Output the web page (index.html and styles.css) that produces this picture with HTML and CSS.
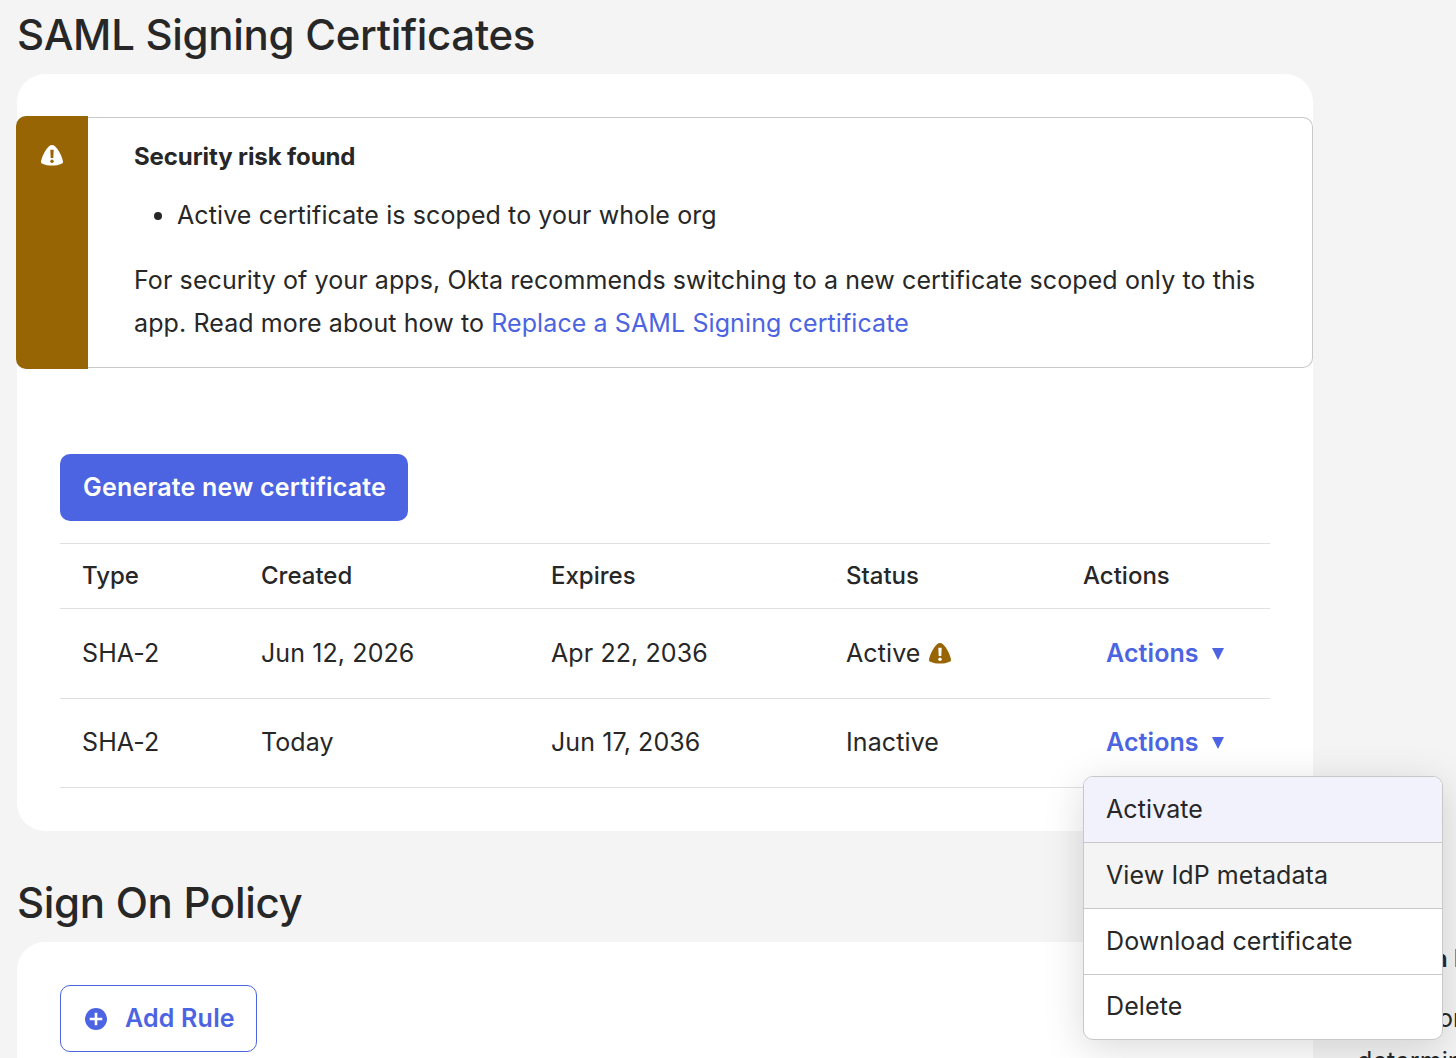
FILE: index.html
```
<!DOCTYPE html>
<html lang="en">
<head>
  <meta charset="UTF-8">
  <meta name="viewport" content="width=device-width, initial-scale=1.0">
  <title>SAML Signing Certificates</title>
  <link rel="stylesheet" href="styles.css">
</head>
<body>
  <div class="page">
    <main class="main">
      <h2>SAML Signing Certificates</h2>

      <section class="card certificates">
        <div class="infobox">
          <div class="infobox-icon">
            <svg width="22" height="21" viewBox="0 0 22 21">
              <path class="shape" d="M11 0C8.800 0 7.200 1.700 5.200 4.600C2.600 8.400 0.900 12.600 0.100 16C-0.200 17.300 0.200 18.200 1.400 18.800C4 20.100 7.600 20.600 11 20.600S18 20.100 20.600 18.800C21.800 18.200 22.200 17.300 21.900 16C21.100 12.600 19.400 8.400 16.800 4.600C14.800 1.700 13.200 0 11 0Z"/>
              <path class="mark" d="M9.300 4.700H12.700L12.300 13H9.700Z"/>
              <circle class="mark" cx="11" cy="16.200" r="1.700"/>
            </svg>
          </div>
          <div class="infobox-body">
            <h3>Security risk found</h3>
            <ul>
              <li>Active certificate is scoped to your whole org</li>
            </ul>
            <p>For security of your apps, Okta recommends switching to a new certificate scoped only to this<br>app. Read more about how to <a href="#">Replace a SAML Signing certificate</a></p>
          </div>
        </div>

        <button class="button button-primary">Generate new certificate</button>

        <table>
          <thead>
            <tr>
              <th class="col-type">Type</th>
              <th class="col-created">Created</th>
              <th class="col-expires">Expires</th>
              <th class="col-status">Status</th>
              <th class="col-actions">Actions</th>
            </tr>
          </thead>
          <tbody>
            <tr class="row-active">
              <td>SHA-2</td>
              <td>Jun 12, 2026</td>
              <td>Apr 22, 2036</td>
              <td>
                <span class="status">Active
                  <svg width="22" height="21" viewBox="0 0 22 21">
                    <path class="shape" d="M11 0C8.800 0 7.200 1.700 5.200 4.600C2.600 8.400 0.900 12.600 0.100 16C-0.200 17.300 0.200 18.200 1.400 18.800C4 20.100 7.600 20.600 11 20.600S18 20.100 20.600 18.800C21.800 18.200 22.200 17.300 21.900 16C21.100 12.600 19.400 8.400 16.800 4.600C14.800 1.700 13.200 0 11 0Z"/>
                    <path class="mark" d="M9.300 4.700H12.700L12.300 13H9.700Z"/>
                    <circle class="mark" cx="11" cy="16.200" r="1.700"/>
                  </svg>
                </span>
              </td>
              <td>
                <a class="actions-toggle" href="#">Actions <span class="caret"></span></a>
              </td>
            </tr>
            <tr class="row-inactive">
              <td>SHA-2</td>
              <td>Today</td>
              <td>Jun 17, 2036</td>
              <td>Inactive</td>
              <td class="dropdown">
                <a class="actions-toggle" href="#">Actions <span class="caret"></span></a>
                <ul class="menu">
                  <li class="focused">Activate</li>
                  <li class="hovered">View IdP metadata</li>
                  <li>Download certificate</li>
                  <li>Delete</li>
                </ul>
              </td>
            </tr>
          </tbody>
        </table>
      </section>

      <h2 class="policy-title">Sign On Policy</h2>

      <section class="card policy">
        <button class="button button-outline">
          <svg width="22" height="22" viewBox="0 0 22 22">
            <circle cx="11" cy="11" r="11" fill="#4c64e1"/>
            <path d="M11 4.700V17.300M4.700 11H17.300" stroke="#fff" stroke-width="2.600"/>
          </svg>
          Add Rule
        </button>
      </section>
    </main>

    <aside class="sidebar">
      <h4>Sign On Policy</h4>
      <p>Rules for apps<br>determine how</p>
    </aside>
  </div>
</body>
</html>
```

FILE: styles.css
```
* {
  box-sizing: border-box;
}

body {
  margin: 0;
  height: 1058px;
  overflow: hidden;
  background-color: #f4f4f4;
  color: #272727;
  font-family: Inter, "Liberation Sans", sans-serif;
  font-size: 25px;
  letter-spacing: 0.1px;
}

h2, h3, h4, p, ul {
  margin: 0;
  padding: 0;
}

a {
  color: #4c64e1;
  text-decoration: none;
}

.page {
  display: grid;
  grid-template-columns: 1296px 1fr;
  column-gap: 44px;
  height: 1058px;
  padding-left: 17px;
  overflow: hidden;
}

h2 {
  height: 74px;
  padding-top: 9px;
  font-size: 42px;
  font-weight: 500;
  line-height: 51px;
  letter-spacing: -0.3px;
  white-space: nowrap;
}

.policy-title {
  height: 111px;
  padding-top: 46px;
}

.card {
  background-color: #fff;
  border-radius: 28px;
}

.certificates {
  height: 757px;
  padding: 42px 43px 0;
}

.infobox {
  display: flex;
  height: 253px;
  margin: 0 -43px 85px -44px;
}

.infobox-icon {
  width: 72px;
  padding: 29px 0 0 25px;
  background-color: #976504;
  border-radius: 10px 0 0 10px;
}

.infobox-icon svg {
  display: block;
}

.infobox-icon .shape {
  fill: #fff;
}

.infobox-icon .mark {
  fill: #976504;
}

.infobox-body {
  flex: 1;
  margin: 1px 0;
  padding: 20px 0 0 46px;
  border: 1px solid #c8c8c8;
  border-left: 0;
  border-radius: 0 10px 10px 0;
  line-height: 43px;
  white-space: nowrap;
}

h3 {
  font-size: 24px;
  font-weight: 700;
  line-height: 38px;
  letter-spacing: -0.1px;
}

.infobox ul {
  margin: 18px 0 22px;
  padding-left: 43px;
}

.button {
  display: flex;
  align-items: center;
  height: 67px;
  padding: 0 23px 2px;
  border: 0;
  border-radius: 10px;
  font: 600 25px Inter, "Liberation Sans", sans-serif;
  letter-spacing: 0.2px;
  white-space: nowrap;
}

.button-primary {
  width: 348px;
  background-color: #4c64e1;
  color: #fff;
}

table {
  width: 1210px;
  margin-top: 22px;
  border-top: 1px solid #e0e0e0;
  border-spacing: 0;
  table-layout: fixed;
}

th, td {
  padding: 0 0 2px 22px;
  border-bottom: 1px solid #e0e0e0;
  text-align: left;
  white-space: nowrap;
}

th {
  height: 65px;
  font-size: 24px;
  font-weight: 500;
  letter-spacing: 0;
}

.col-type {
  width: 179px;
}

.col-created {
  width: 290px;
}

.col-expires {
  width: 295px;
}

.col-status {
  width: 237px;
}

.row-active td {
  height: 90px;
}

.row-inactive td {
  height: 89px;
}

.status {
  display: flex;
  align-items: center;
  gap: 8px;
}

.status svg {
  margin-top: 2px;
}

.status .shape {
  fill: #976504;
}

.status .mark {
  fill: #fff;
}

.actions-toggle {
  display: flex;
  align-items: center;
  gap: 13px;
  padding-left: 23px;
  font-weight: 600;
}

.caret {
  margin-top: 3px;
  border: 6px solid transparent;
  border-top: 12px solid #4c64e1;
  border-bottom: 0;
}

.row-inactive .caret {
  margin-top: 1px;
}

.dropdown {
  position: relative;
}

.menu {
  position: absolute;
  top: 77px;
  left: 22px;
  width: 360px;
  overflow: hidden;
  background-color: #fff;
  border: 1px solid #c8c8c8;
  border-radius: 10px;
  box-shadow: 0 8px 40px rgba(0, 0, 0, 0.15);
  list-style: none;
}

.menu li {
  height: 66px;
  padding-left: 22px;
  border-bottom: 1px solid #c8c8c8;
  line-height: 65px;
}

.menu li:last-child {
  height: 64px;
  border-bottom: 0;
  line-height: 63px;
}

.menu .focused {
  background-color: #f2f2fd;
}

.menu .hovered {
  background-color: #f4f4f4;
}

.policy {
  height: 300px;
  padding: 43px;
}

.button-outline {
  gap: 18px;
  width: 197px;
  padding-left: 24px;
  border: 1px solid #4c64e1;
  background-color: #fff;
  color: #4c64e1;
}

.button-outline svg {
  flex-shrink: 0;
  margin-top: 2px;
}

.sidebar {
  padding-top: 937px;
  line-height: 43px;
  white-space: nowrap;
}

.sidebar h4 {
  margin-bottom: 17px;
  font-size: 24px;
  font-weight: 600;
  letter-spacing: 0;
}
```
